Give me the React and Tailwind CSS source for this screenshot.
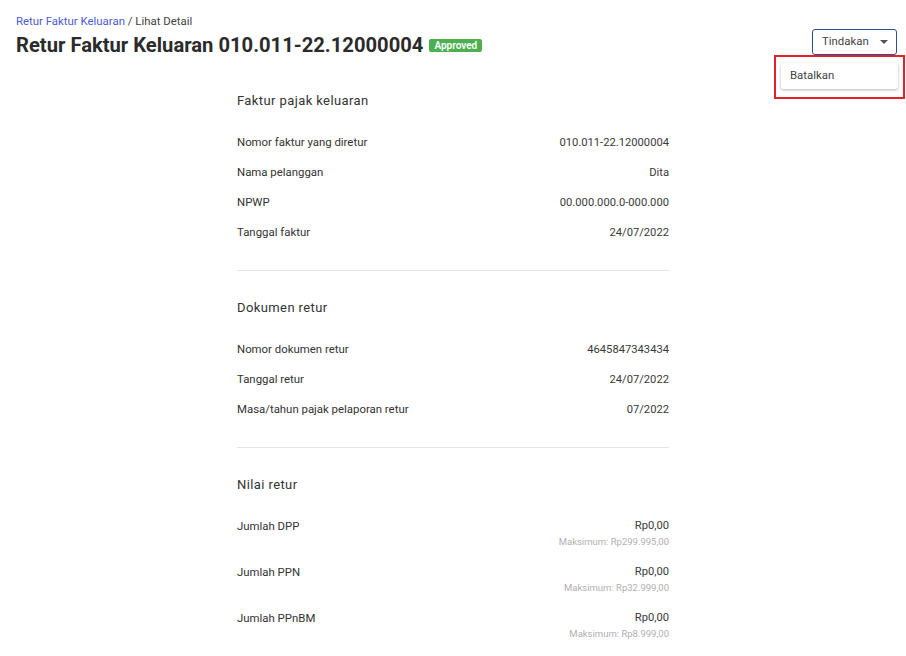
const faktur = [
  ["Nomor faktur yang diretur", "010.011-22.12000004"],
  ["Nama pelanggan", "Dita"],
  ["NPWP", "00.000.000.0-000.000"],
  ["Tanggal faktur", "24/07/2022"],
];

const dokumen = [
  ["Nomor dokumen retur", "4645847343434"],
  ["Tanggal retur", "24/07/2022"],
  ["Masa/tahun pajak pelaporan retur", "07/2022"],
];

const nilai = [
  ["Jumlah DPP", "Rp0,00", "Maksimum: Rp299.995,00"],
  ["Jumlah PPN", "Rp0,00", "Maksimum: Rp32.999,00"],
  ["Jumlah PPnBM", "Rp0,00", "Maksimum: Rp8.999,00"],
];

function SectionTitle({ children }) {
  return (
    <h2 className="text-[13px] font-normal text-[#333] tracking-[0.4px] leading-5 mb-[17px]">
      {children}
    </h2>
  );
}

function Row({ label, value }) {
  return (
    <div className="flex justify-between items-center h-[30px] text-[11.4px] text-[#333]">
      <span>{label}</span>
      <span className="text-[11.2px] text-[#3a3a3a]">{value}</span>
    </div>
  );
}

export default function App() {
  return (
    <div
      className="relative min-h-[656px] bg-white text-[#333]"
      style={{ fontFamily: "Roboto, 'Liberation Sans', sans-serif" }}
    >
      <div className="flex justify-between items-start pl-4 pr-[9px] pt-[13px]">
        <div>
          <div className="text-[11.4px] leading-4">
            <span className="text-[#4e5bd3]">Retur Faktur Keluaran</span>
            <span className="text-[#444]"> / Lihat Detail</span>
          </div>
          <div className="flex items-center gap-[6px] mt-[2px]">
            <h1 className="text-[20.2px] font-bold leading-7 text-[#2b2b2b]">
              Retur Faktur Keluaran 010.011-22.12000004
            </h1>
            <span className="bg-[#4caf50] text-white text-[10px] font-semibold leading-[13px] px-[5px] rounded-[2px] mt-[1px]">
              Approved
            </span>
          </div>
        </div>
        <div className="relative mt-[16px]">
          <button className="flex items-center justify-between w-[85px] h-[26px] pl-[9px] pr-[8px] border border-[#2d4f8f] rounded-[3px] text-[11.4px] text-[#444] bg-white">
            Tindakan
            <span className="w-0 h-0 border-l-[4px] border-r-[4px] border-t-[4px] border-l-transparent border-r-transparent border-t-[#555]" />
          </button>
          <div className="absolute right-[-8px] top-[26px] w-[131px] h-[44px] border-2 border-[#e3212b] p-[5px] pt-[6px]">
            <div className="h-[26px] bg-white rounded-[3px] shadow-[0_1px_3px_rgba(0,0,0,0.3)] text-[11.4px] text-[#444] flex items-center pl-[9px]">
              Batalkan
            </div>
          </div>
        </div>
      </div>

      <div className="w-[432px] mx-auto mt-[32px]">
        <SectionTitle>Faktur pajak keluaran</SectionTitle>
        {faktur.map(([l, v]) => (
          <Row key={l} label={l} value={v} />
        ))}
        <div className="border-t border-[#e3e3e3] mt-[22px] mb-[27px]" />
        <SectionTitle>Dokumen retur</SectionTitle>
        {dokumen.map(([l, v]) => (
          <Row key={l} label={l} value={v} />
        ))}
        <div className="border-t border-[#e3e3e3] mt-[22px] mb-[27px]" />
        <SectionTitle>Nilai retur</SectionTitle>
        {nilai.map(([l, v, m]) => (
          <div key={l} className="flex justify-between h-[46px] pt-[4px] text-[11.4px] text-[#333]">
            <span className="leading-5">{l}</span>
            <div className="text-right">
              <div className="leading-5 text-[11.2px] text-[#3a3a3a]">{v}</div>
              <div className="text-[9.5px] text-[#b0b0b0] leading-3">{m}</div>
            </div>
          </div>
        ))}
      </div>
    </div>
  );
}
